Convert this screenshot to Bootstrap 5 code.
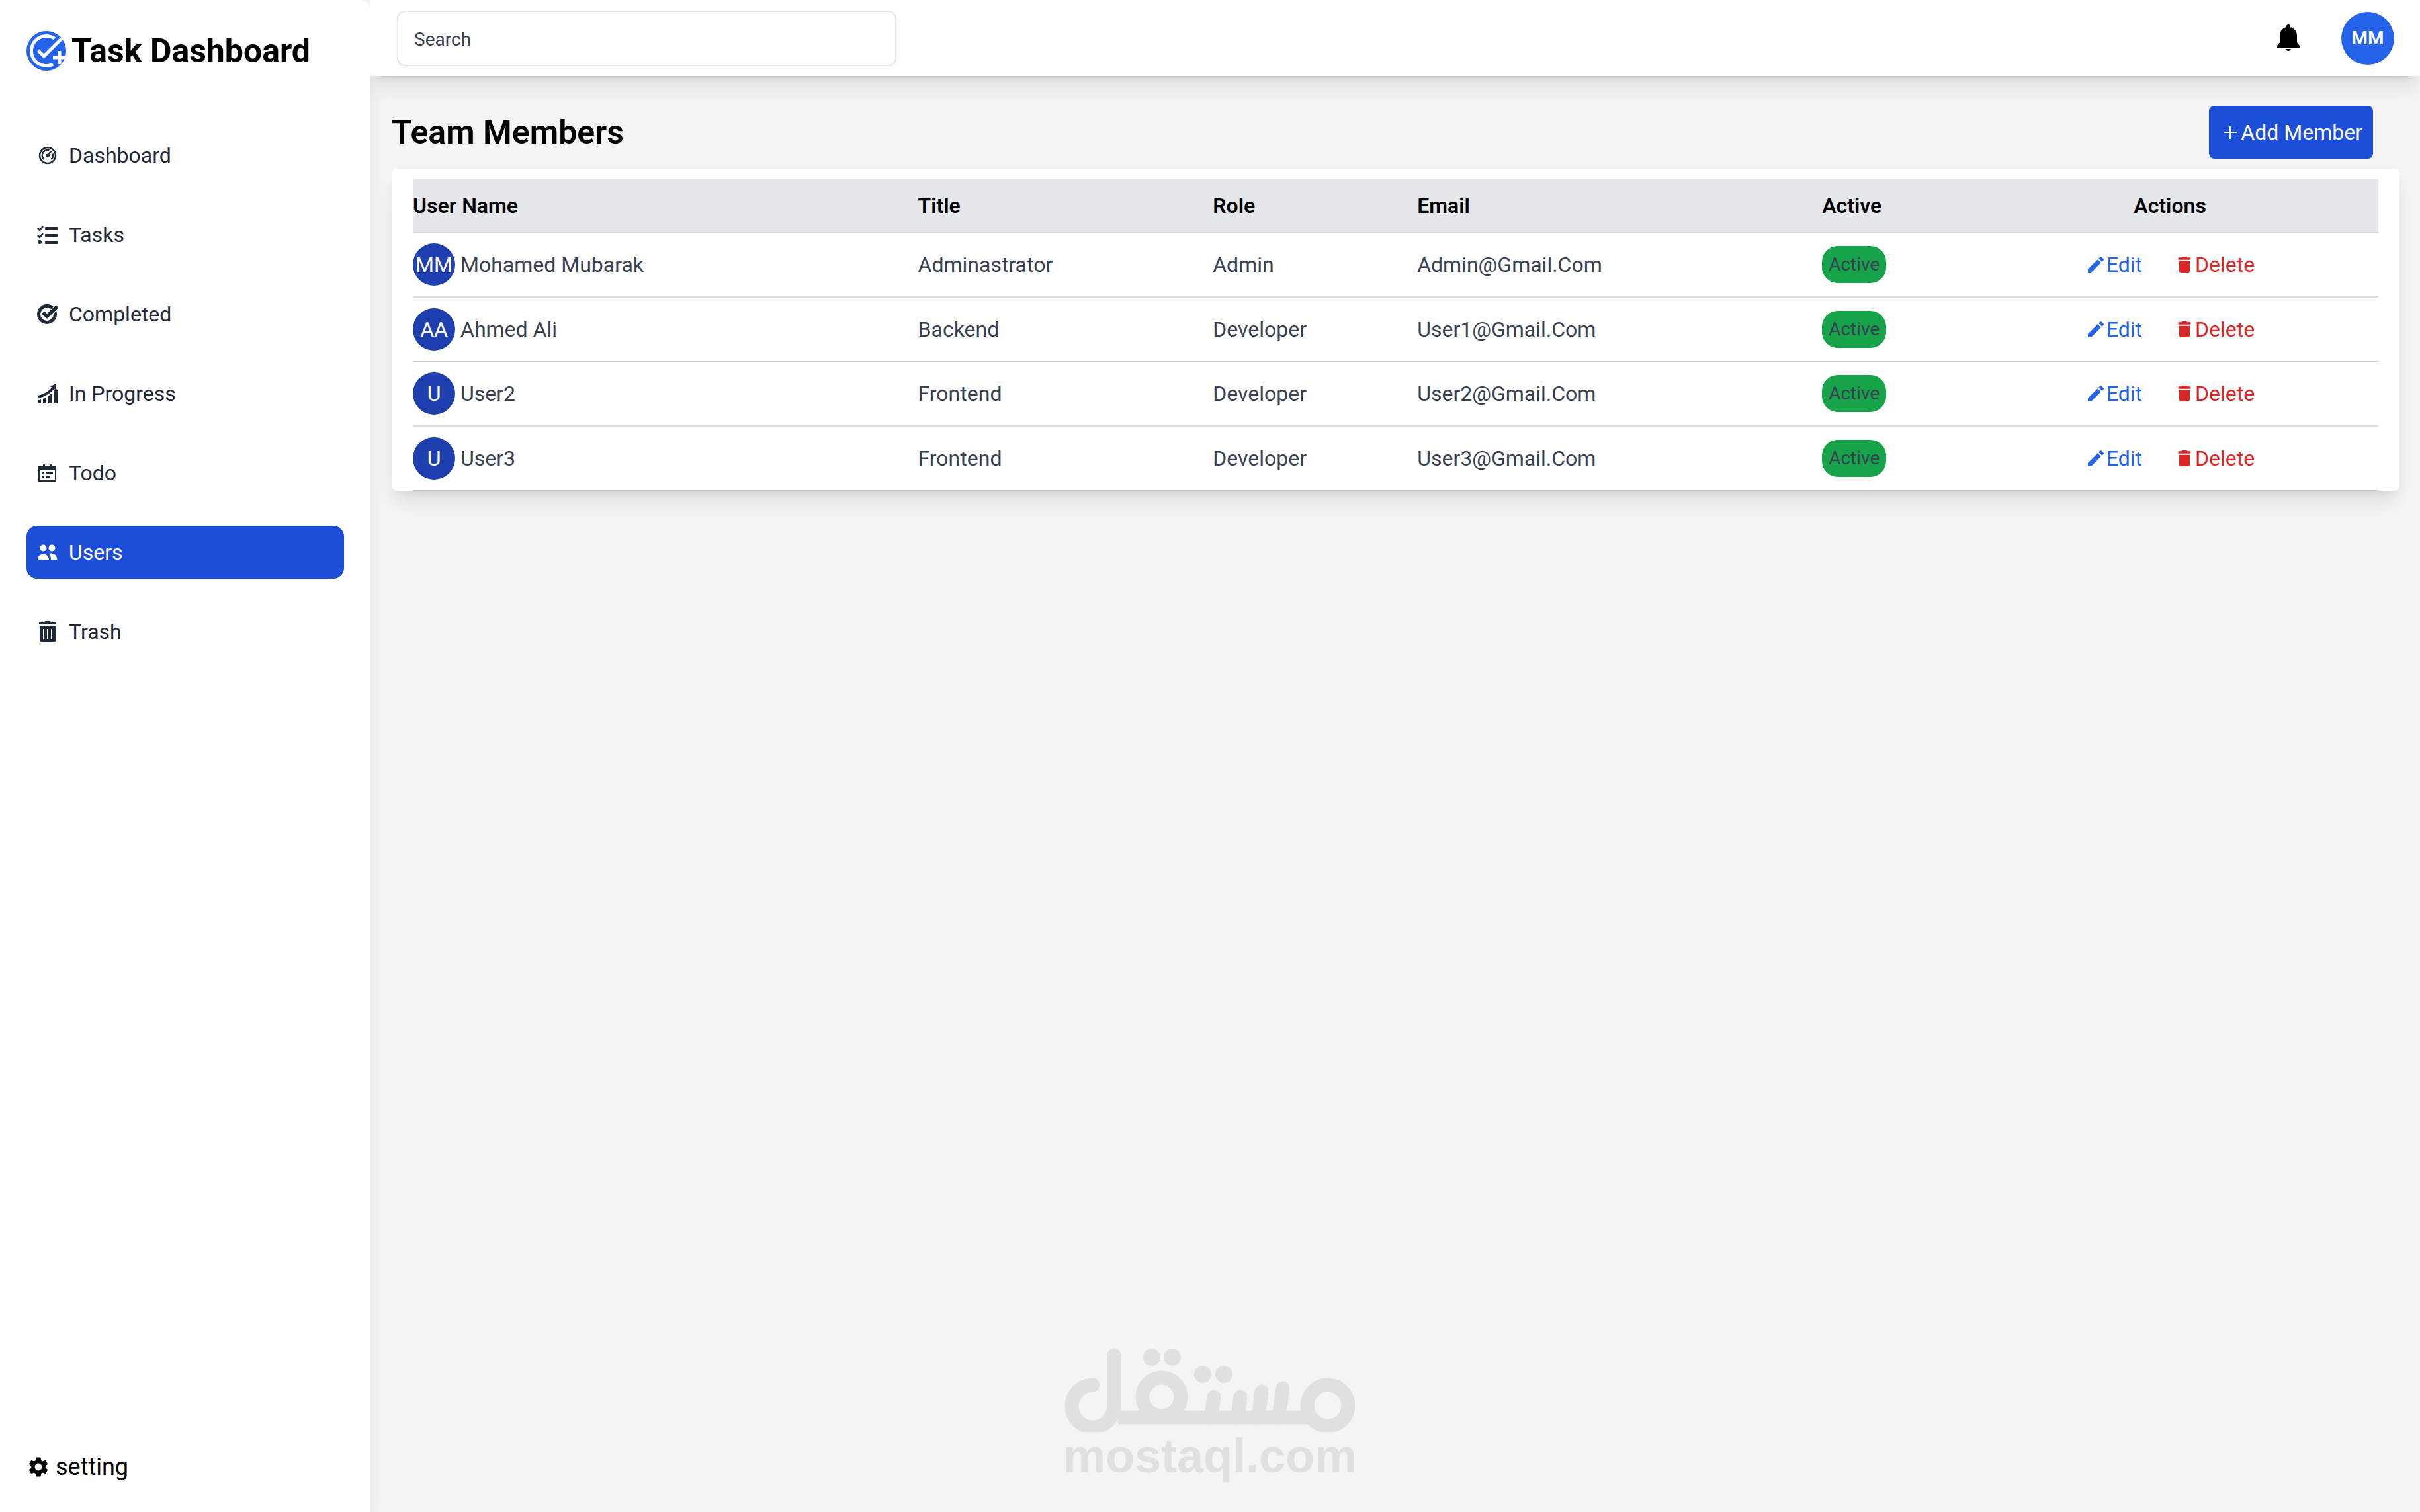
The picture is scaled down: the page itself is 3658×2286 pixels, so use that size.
<!DOCTYPE html>
<html lang="en">
<head>
<meta charset="utf-8">
<meta name="viewport" content="width=device-width, initial-scale=1">
<title>Task Dashboard</title>
<link rel="stylesheet" href="https://cdn.jsdelivr.net/npm/bootstrap@5.3.0/dist/css/bootstrap.min.css">
<style>
:root { --panel-shadow: 0 20px 30px -6px rgba(0,0,0,.1), 0 8px 12px -8px rgba(0,0,0,.1); }
body { font-family: Roboto, "Liberation Sans", sans-serif; font-size: 32px; line-height: 48px; color: #000; background: #f4f4f4; }
svg { display: block; flex: none; fill: currentColor; }
.ico { width: 32px; height: 32px; }
.side { width: 560px; padding: 41px 40px 40px; border-top-right-radius: 16px; box-shadow: var(--panel-shadow); }
.brand { gap: 8px; font-size: 50px; line-height: 72px; font-weight: 700; color: #000; margin-bottom: 82px; }
.brand-mark { width: 60px; height: 60px; background: #2563eb; color: #fff; }
.side .nav { gap: 40px; }
.side .nav-link { gap: 16px; padding: 16px; border-radius: 16px; color: #1f2937; }
.side .nav-link.active { background: #1d4ed8; color: #fff; }
.setting-link { gap: 8px; font-size: 36px; line-height: 56px; color: #000; }
.setting-link svg { width: 36px; height: 36px; }
.topbar { padding: 16px 39px 15px 40px; box-shadow: var(--panel-shadow); }
.search-box { width: 755px; height: 84px; padding: 2px 24px 0; font-size: 28px; border: 2px solid #e5e7eb; border-radius: 12px; box-shadow: 0 2px 4px rgba(0,0,0,.05); }
.search-box::placeholder { color: #374151; opacity: 1; }
.bell { width: 48px; height: 48px; }
.me { width: 80px; height: 80px; background: #2563eb; font-size: 28px; font-weight: 600; }
.topbar-end { gap: 56px; }
.page-area { padding: 45px 31px 40px 32px; }
.page-head { padding-right: 40px; margin-bottom: 15px; }
.page-head h1 { font-size: 50px; line-height: 72px; font-weight: 600; }
.add-btn { padding: 16px; font-size: 32px; line-height: 48px; border: 0; border-radius: 8px; background: #1d4ed8; color: #fff; }
.members { padding: 16px 32px 0; border: 0; border-radius: 8px; box-shadow: var(--panel-shadow); }
.members table { table-layout: fixed; color: #374151; }
.members th { padding: 16px 0; color: #000; background: #e5e7eb; border-bottom: 1px solid #d1d5db; font-weight: 600; }
.members td { padding: 16px 0; border-bottom: 2px solid #dbdde1; }
.members tr:nth-child(even) td { border-bottom-width: 1px; border-color: #c9ced6; }
.face { width: 64px; height: 64px; background: #1e40af; }
.state { padding: 8px 10px; border-radius: 24px; background: #16a34a; font-size: 28px; line-height: 40px; }
.act { padding: 0; font-size: 32px; line-height: 48px; border: 0; }
.act-edit { color: #2563eb; }
.act-del { color: #dc2626; }
.watermark { bottom: 49px; color: #e0e0e0; font: 700 72px/72px "Liberation Sans", sans-serif; pointer-events: none; }
.watermark svg { margin: 0 auto; }
</style>
</head>
<body>
<svg class="d-none" aria-hidden="true">
  <symbol id="i-edit" viewBox="0 0 24 24"><path d="M3 17.250V21h3.750L17.810 9.940l-3.750-3.750L3 17.250zM20.710 7.040a1 1 0 0 0 0-1.410l-2.340-2.340a1 1 0 0 0-1.410 0l-1.830 1.830 3.750 3.750 1.830-1.830z"/></symbol>
  <symbol id="i-delete" viewBox="0 0 24 24"><path d="M6 19c0 1.100.9 2 2 2h8c1.100 0 2-.9 2-2V8H6v11zM19 4h-3.500l-1-1h-5l-1 1H5v2.500h14V4z"/></symbol>
</svg>
<div class="d-flex min-vh-100">
  <aside class="side bg-white d-flex flex-column flex-shrink-0">
    <a href="#" class="brand d-flex align-items-center text-decoration-none">
      <span class="brand-mark rounded-circle overflow-hidden"><svg viewBox="0 0 24 24" width="60" height="60"><path d="M22 5.180 10.590 16.600l-4.240-4.240 1.410-1.410 2.830 2.830 10-10L22 5.180zM12 20c-4.410 0-8-3.590-8-8s3.590-8 8-8c1.570 0 3.040.46 4.280 1.250l1.450-1.450A10.020 10.020 0 0 0 12 2C6.480 2 2 6.480 2 12s4.480 10 10 10c1.730 0 3.360-.44 4.780-1.220l-1.500-1.500c-1 .46-2.110.72-3.280.72zm7-5h-3v2h3v3h2v-3h3v-2h-3v-3h-2v3z"/></svg></span>
      <span>Task Dashboard</span>
    </a>
    <nav class="nav flex-column">
      <a class="nav-link d-flex align-items-center" href="#"><svg class="ico" viewBox="0 0 32 32"><g fill="none" stroke="currentColor" stroke-width="2.500"><circle cx="16" cy="16" r="12"/><path d="M10.500 22A8 8 0 0 1 18.500 8.500M23.600 13.500A8 8 0 0 1 21.500 22"/><path d="M16 16 21.500 9.500"/></g><circle cx="16" cy="16.500" r="2.800"/></svg>Dashboard</a>
      <a class="nav-link d-flex align-items-center" href="#"><svg class="ico" viewBox="0 0 32 32"><path d="m1 6 3 3 5-6M1 17l3 3 5-6" fill="none" stroke="currentColor" stroke-width="2.500"/><circle cx="4" cy="27" r="3"/><rect x="12" y="4" width="20" height="4" rx="1"/><rect x="12" y="15" width="20" height="4" rx="1"/><rect x="12" y="26" width="20" height="4" rx="1"/></svg>Tasks</a>
      <a class="nav-link d-flex align-items-center" href="#"><svg class="ico" viewBox="0 0 32 32"><circle cx="15" cy="16" r="12.500" fill="none" stroke="currentColor" stroke-width="5"/><path d="m9 14 6 5.500L31 4" fill="none" stroke="#fff" stroke-width="8"/><path d="m9 13.500 6 5.500L30.500 4.500" fill="none" stroke="currentColor" stroke-width="5.500"/></svg>Completed</a>
      <a class="nav-link d-flex align-items-center" href="#"><svg class="ico" viewBox="0 0 32 32"><path d="M1 25l2 1 3-1v6H1zM9 24l5-2v9H9zM17 20l5-4v15h-5zM25 12l3-3 3 1v21h-5z"/><path d="M2 21Q16 18 26 6" fill="none" stroke="currentColor" stroke-width="4"/><path d="m20 5 9-4v10z"/></svg>In Progress</a>
      <a class="nav-link d-flex align-items-center" href="#"><svg class="ico" viewBox="0 0 32 32"><path fill-rule="evenodd" d="M9 2h3v3h8V2h3v3h6v24H2V5h7zM5 12v14h22V12zM8 15h3v3H8zm5 0h11v3H13zm-5 5h3v3H8zm5 0h7v3h-7z"/></svg>Todo</a>
      <a class="nav-link active d-flex align-items-center" href="#" aria-current="page"><svg class="ico" viewBox="0 0 32 32"><circle cx="9.500" cy="9.500" r="5"/><circle cx="22.500" cy="9.500" r="5"/><path d="M1 27.500c0-12 17-12 17 0zM17.500 18c6-2 13 1 13 9.500h-9.500c0-4-.5-7-3.500-9.500z"/></svg>Users</a>
      <a class="nav-link d-flex align-items-center" href="#"><svg class="ico" viewBox="0 0 32 32"><path fill-rule="evenodd" d="M12 0h8l2 2h7v3H3V2h7zM4 8h24v21q0 3-3 3H7q-3 0-3-3zM9 12v15h2V12zm6 0v15h2V12zm6 0v15h2V12z"/></svg>Trash</a>
    </nav>
    <a href="#" class="setting-link d-flex align-items-center text-decoration-none mt-auto"><svg viewBox="0 0 24 24"><path d="M19.140 12.940c.04-.3.06-.61.06-.94 0-.32-.02-.64-.07-.94l2.030-1.580a.49.49 0 0 0 .12-.61l-1.920-3.320a.488.488 0 0 0-.59-.22l-2.390.96c-.5-.38-1.030-.7-1.620-.94l-.36-2.540a.484.484 0 0 0-.48-.41h-3.840c-.24 0-.43.17-.47.41l-.36 2.540c-.59.24-1.130.57-1.620.94l-2.390-.96c-.22-.08-.47 0-.59.22L2.740 8.870c-.12.21-.08.47.12.61l2.030 1.580c-.05.3-.09.63-.09.94s.02.64.07.94l-2.030 1.580a.49.49 0 0 0-.12.61l1.920 3.320c.12.22.37.29.59.22l2.390-.96c.5.38 1.030.7 1.620.94l.36 2.540c.05.24.24.41.48.41h3.840c.24 0 .44-.17.47-.41l.36-2.540c.59-.24 1.130-.56 1.620-.94l2.390.96c.22.08.47 0 .59-.22l1.920-3.320c.12-.22.07-.47-.12-.61l-2.010-1.580zM12 15.600c-1.980 0-3.600-1.620-3.600-3.600s1.620-3.600 3.600-3.600 3.600 1.620 3.600 3.600-1.620 3.600-3.600 3.600z"/></svg>setting</a>
  </aside>
  <div class="flex-grow-1 overflow-hidden">
    <header class="topbar bg-white d-flex align-items-center justify-content-between">
      <input type="search" class="search-box form-control" placeholder="Search" aria-label="Search">
      <div class="topbar-end d-flex align-items-center">
        <button type="button" class="btn p-0 border-0 text-black" aria-label="Notifications"><svg class="bell" viewBox="0 0 48 48"><path d="M24 3c2 0 3 1.500 3 4 6 1.500 10 6 10 13v10l4 5v3H7v-3l4-5V20c0-7 4-11.500 10-13 0-2.500 1-4 3-4zM20 40h8c-1 4-7 4-8 0z"/></svg></button>
        <span class="me rounded-circle text-white d-flex align-items-center justify-content-center">MM</span>
      </div>
    </header>
    <main class="page-area">
      <div class="page-head d-flex align-items-center justify-content-between">
        <h1 class="m-0">Team Members</h1>
        <button type="button" class="add-btn btn d-flex align-items-center"><svg class="ico" viewBox="0 0 32 32"><path d="M15 6h2v9h9v2h-9v9h-2v-9H7v-2h8z"/></svg>Add Member</button>
      </div>
      <div class="members card bg-white">
        <table class="w-100">
          <colgroup><col style="width:25.7%"><col style="width:15%"><col style="width:10.4%"><col style="width:20.6%"><col style="width:7.1%"><col></colgroup>
          <thead><tr><th>User Name</th><th>Title</th><th>Role</th><th>Email</th><th>Active</th><th class="text-center">Actions</th></tr></thead>
          <tbody id="member-rows"></tbody>
        </table>
      </div>
    </main>
  </div>
</div>
<div class="watermark position-fixed start-50 translate-middle-x">
  <svg width="438" height="127" viewBox="0 0 438 127" fill="none" stroke="currentColor" stroke-width="21" stroke-linecap="round" role="img" aria-label="مستقل">
    <g fill="none">
      <path d="M74 11V87A32 32 0 1 1 42 56"/>
      <path d="M80 105H370" stroke-linecap="butt"/>
      <circle cx="146" cy="74" r="29"/>
      <circle cx="397" cy="87" r="31"/>
      <path d="M225 74l-4 31M265 74l-4 31M297 66l-5 39M329 61l-6 44"/>
    </g>
    <g fill="currentColor" stroke="none"><circle cx="131" cy="14" r="13"/><circle cx="162" cy="14" r="13"/><circle cx="208" cy="40" r="13"/><circle cx="240" cy="40" r="13"/></g>
  </svg>
  <div>mostaql.com</div>
</div>
<script src="https://cdn.jsdelivr.net/npm/bootstrap@5.3.0/dist/js/bootstrap.bundle.min.js"></script>
<script>
const members = [
  ["MM", "Mohamed Mubarak", "Adminastrator", "Admin", "Admin@Gmail.Com"],
  ["AA", "Ahmed Ali", "Backend", "Developer", "User1@Gmail.Com"],
  ["U", "User2", "Frontend", "Developer", "User2@Gmail.Com"],
  ["U", "User3", "Frontend", "Developer", "User3@Gmail.Com"]
];
document.getElementById("member-rows").innerHTML = members.map(([initials, name, title, role, email]) => `
  <tr>
    <td><div class="d-flex align-items-center gap-2"><span class="face rounded-circle text-white d-flex align-items-center justify-content-center">${initials}</span>${name}</div></td>
    <td>${title}</td><td>${role}</td><td>${email}</td>
    <td><div class="d-flex"><span class="state">Active</span></div></td>
    <td><div class="d-flex justify-content-center gap-5">
      <button type="button" class="act act-edit btn d-flex align-items-center"><svg class="ico"><use href="#i-edit"/></svg>Edit</button>
      <button type="button" class="act act-del btn d-flex align-items-center"><svg class="ico"><use href="#i-delete"/></svg>Delete</button>
    </div></td>
  </tr>`).join("");
</script>
</body>
</html>
